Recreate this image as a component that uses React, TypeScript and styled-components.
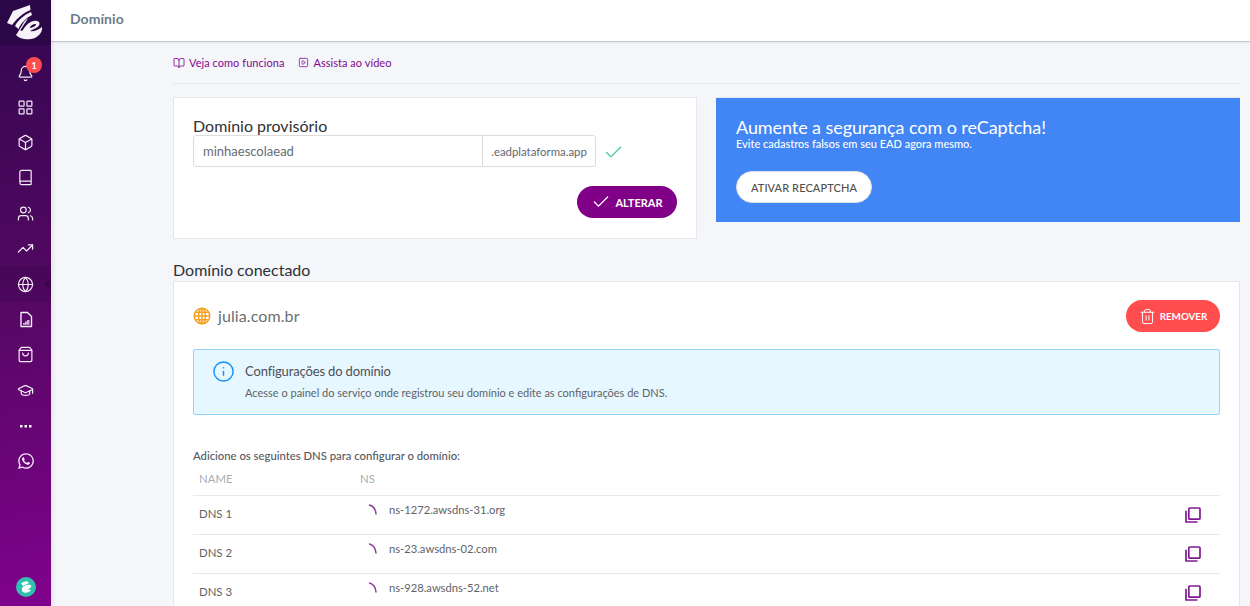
import React from "react";
import styled, { createGlobalStyle } from "styled-components";
import { Bell, LayoutGrid, Box, Book, Users, TrendingUp, Globe, ShoppingBag, GraduationCap, Check, Trash2, Info, BookOpen, SquarePlay } from "lucide-react";
import { FaWhatsapp } from "react-icons/fa";

const Global = createGlobalStyle`
  html, body { margin: 0; padding: 0; height: 606px; overflow: hidden; background: #f4f6fa; }
  * { box-sizing: border-box; }
  body { font-family: Lato, "Liberation Sans", sans-serif; color: #4a4a4a; }
`;

const Page = styled.div`display: flex; width: 1250px; height: 606px; overflow: hidden;`;

const Sidebar = styled.aside`
  width: 51px; height: 606px; flex: none; display: flex; flex-direction: column; align-items: stretch;
  background: linear-gradient(170deg, #33074f 0%, #510860 45%, #80028c 100%);
  box-shadow: 2px 0 4px rgba(0,0,0,.08);
  z-index: 2;
`;
const LogoBox = styled.div`height: 45px; background: #2c0747; display: flex; flex: none;`;
const Nav = styled.nav`display: flex; flex-direction: column; padding-top: 9px; flex: 1;`;
const NavItem = styled.div<{ $active?: boolean }>`
  position: relative; height: 35.4px; display: flex; align-items: center; justify-content: center; color: #f4ecf7;
  ${(p) => p.$active && `background: rgba(50, 5, 70, .25);
    &::after { content: ""; position: absolute; right: 0; top: 50%; margin-top: -7px; border: 7px solid transparent; border-left-width: 0; border-right-color: rgba(50, 5, 70, .55); }`}
`;
const BellIcon = styled(Bell)`margin-top: 3px;`;
const Badge = styled.span`
  position: absolute; left: 26px; top: 3px; width: 16px; height: 16px; border-radius: 50%; background: #ff4d4f; color: #fff;
  font-size: 9px; font-weight: 700; display: flex; align-items: center; justify-content: center;
`;
const Avatar = styled.div`
  width: 20px; height: 20px; border-radius: 50%; background: #2fc0b0; margin: 0 0 9px 16px; flex: none;
  display: flex; align-items: center; justify-content: center;
`;

const Main = styled.main`flex: 1; min-width: 0; display: flex; flex-direction: column;`;
const TopBar = styled.header`
  height: 42px; flex: none; background: #fff; border-bottom: 1px solid #c4c6ca; box-shadow: 0 1px 2px rgba(0,0,0,.06);
  padding-left: 19px; display: flex; align-items: center; padding-bottom: 5px;
  font-size: 14px; font-weight: 700; color: #6b7b8c; letter-spacing: .05px;
`;
const Content = styled.div`padding: 0 10px 0 122px; display: flex; flex-direction: column;`;
const HelpRow = styled.div`
  height: 42px; border-bottom: 1px solid #e8e9ec; display: flex; align-items: center; gap: 14px;
`;
const HelpLink = styled.a`
  display: inline-flex; align-items: center; gap: 4px; font-size: 11px; color: #7f0a8c; letter-spacing: .04px;
  svg { color: #8b1a98; }
`;
const Columns = styled.div`display: flex; gap: 19px; align-items: flex-start; margin-top: 13px;`;
const Card = styled.section`
  background: #fff; border: 1px solid #e6e7ea; width: 524px; height: 142px; padding: 19px 19px 0 19px;
`;
const CardTitle = styled.div`font-size: 16px; line-height: 17px; color: #2f3136; margin-bottom: 1px;`;
const InputRow = styled.div`display: flex; align-items: center; gap: 7px;`;
const InputGroup = styled.div`
  display: flex; width: 403px; height: 32px; border: 1px solid #dcdcdc; border-radius: 3px; flex: none;
`;
const InputText = styled.div`flex: 1; padding: 0 0 1px 9px; display: flex; align-items: center; font-size: 13px; color: #666c75;`;
const InputAddon = styled.div`width: 113px; border-left: 1px solid #dcdcdc; display: flex; align-items: center; justify-content: center; font-size: 11.4px; color: #5f6670;`;
const StatusCheck = styled(Check)`margin-top: 2px;`;
const ActionRow = styled.div`display: flex; justify-content: flex-end; margin-top: 19px;`;
const PillButton = styled.button<{ $bg: string; $w: number; $size: number }>`
  width: ${(p) => p.$w}px; height: 32px; border-radius: 16px; border: 0; background: ${(p) => p.$bg}; color: #fff;
  display: inline-flex; align-items: center; justify-content: center; gap: 4px; font: 700 ${(p) => p.$size}px Lato, sans-serif; padding: 0;
`;
const Promo = styled.section`
  background: #4285f4; width: 524px; height: 125px; padding: 19px 20px; color: #fff; border-top: 1px solid #e6e7ea;
`;
const PromoTitle = styled.div`font-size: 18px; line-height: 20px; letter-spacing: -.08px;`;
const PromoSub = styled.div`font-size: 11px; line-height: 13px; font-weight: 500;`;
const PromoButton = styled.button`
  margin-top: 21px; width: 136px; height: 32px; border-radius: 16px; background: #fff; border: 1px solid #dcdfe6; color: #55504c;
  font: 500 11px Lato, sans-serif; letter-spacing: .1px; padding: 0;
`;
const SectionTitle = styled.div`font-size: 16px; color: #2f3136; line-height: 18px; margin-top: 22px;`;
const BigCard = styled.section`background: #fff; border: 1px solid #e6e7ea; padding: 18px 19px 0 19px; margin-top: 2px; height: 340px;`;
const DomainRow = styled.div`display: flex; align-items: center; justify-content: space-between; height: 32px;`;
const DomainName = styled.div`display: flex; align-items: center; gap: 7px; font-size: 16px; color: #6a6f76; letter-spacing: .1px; padding-bottom: 1px;`;
const Notice = styled.div`
  margin-top: 17px; height: 66px; background: #e6f7ff; border: 1px solid #91d5ff; border-radius: 2px; display: flex; align-items: flex-start; padding: 12px 19px 0;
`;
const NoticeIcon = styled.div`color: #1890ff; width: 33px; flex: none; display: flex; margin: -2px 0 0 -1px;`;
const NoticeTitle = styled.div`font-size: 13px; line-height: 19px; color: #4f4f55; letter-spacing: -.15px;`;
const NoticeText = styled.div`font-size: 11px; line-height: 17px; color: #5f6368; margin-top: 3px;`;
const DnsHeading = styled.div`font-size: 11.3px; font-weight: 500; color: #55585e; margin-top: 34px; line-height: 14px;`;
const Table = styled.div`display: flex; flex-direction: column; margin-top: 1px;`;
const HeadRow = styled.div`display: flex; height: 32px; align-items: center; border-bottom: 1px solid #e8e8e8; font-size: 11.4px; color: #a9adb3; padding: 0 6px 2px;`;
const Row = styled.div`display: flex; height: 39px; align-items: center; border-bottom: 1px solid #e8e8e8; padding: 0 19px 0 6px; font-size: 11.4px; color: #5f6368;`;
const NameCell = styled.div`width: 161px; flex: none;`;
const RowName = styled(NameCell)`padding-bottom: 4px;`;
const ValueCell = styled.div`flex: 1; display: flex; align-items: center; gap: 11px; margin-top: -11px; font-size: 11.2px;`;
const Spinner = styled.svg`width: 18px; height: 18px; flex: none; margin-top: 2px;`;
const CopyIcon = styled.svg`width: 16px; height: 16px; flex: none;`;

const items = [Bell, LayoutGrid, Box, Book, Users, TrendingUp, Globe, "file", ShoppingBag, GraduationCap, "dots", "wa"] as const;

const FileIcon = () => (
  <svg width="16" height="17" viewBox="0 0 16 17" fill="none" stroke="currentColor" strokeWidth="1.4">
    <path d="M3 1.500h6.500L13.500 5.500V15.500H3z" strokeLinejoin="round" />
    <path d="M5 13.800V12h2V10.500h2V9h2.500v4.800z" fill="currentColor" stroke="none" opacity=".75" />
  </svg>
);
const Dots = () => (
  <svg width="14" height="4" viewBox="0 0 14 4" fill="#fff"><rect x="1" y="1" width="2.500" height="2.500" /><rect x="5.500" y="1" width="2.500" height="2.500" /><rect x="10" y="1" width="2.500" height="2.500" /></svg>
);
const Logo = () => (
  <svg width="51" height="45" viewBox="0 0 51 45" fill="#f6f2f8">
    <path d="M7 23 L13 11 L30 5 L30.500 10 C25 12 18 17 12 25 Z" />
    <path d="M15 26 C18 20 24 15 31 12 L32 15 C26 18 21 23 18.500 29 Z" />
    <path d="M24 22 C25.500 20 27 19 28 18.500 L21 29 C20 31 21 32 23 30 C26 25 31 20 37 21 C41 22 40 26 36 28 L30 31 C34 32 38 30 42 27 C43 32 38 38 31 39 C25 40 20 39 16 35 C18 32 21 27 24 22 Z" />
    <path d="M30 27 C32 24.500 35 23.500 36 24.500 C36 26 32.500 27.500 30 28 Z" fill="#2c0747" />
  </svg>
);
const MiniLogo = () => (
  <svg width="14" height="14" viewBox="0 0 14 14" fill="#fff">
    <path d="M2 3 L8 1 L10 3 L4 6 Z" /><path d="M3 8 C5 5 9 4 12 5 C13 8 10 9 8 9 L12 10 C10 13 5 14 3 11 Z" />
  </svg>
);
const SpinnerArc = () => (
  <Spinner viewBox="0 0 18 18" fill="none"><path d="M9.500 3 C13 3.800 15.500 7 16 12" stroke="#8c3f9c" strokeWidth="1.500" strokeLinecap="round" /></Spinner>
);
const OrangeGlobe = () => (
  <svg width="18" height="18" viewBox="0 0 18 18" fill="none" stroke="#f5a11f" strokeWidth="1.500">
    <circle cx="9" cy="9" r="7.800" />
    <ellipse cx="9" cy="9" rx="3.500" ry="7.800" />
    <path d="M9 1.200V16.800M1.200 9H16.800M2.300 5.200H15.700M2.300 12.800H15.700" />
  </svg>
);
const CopyGlyph = () => (
  <CopyIcon viewBox="0 0 16 16" fill="none" stroke="#7f1a92" strokeWidth="1.700">
    <rect x="3.800" y="1" width="11.200" height="11.200" rx="1" />
    <path d="M1 3.800V15H12.500" />
  </CopyIcon>
);

const rows = [["DNS 1", "ns-1272.awsdns-31.org"], ["DNS 2", "ns-23.awsdns-02.com"], ["DNS 3", "ns-928.awsdns-52.net"]];

export default function App() {
  return (
    <Page>
      <Global />
      <Sidebar>
        <LogoBox><Logo /></LogoBox>
        <Nav>
          {items.map((I, i) => (
            <NavItem key={i} $active={I === Globe}>
              {I === "file" ? <FileIcon /> : I === "dots" ? <Dots /> : I === "wa" ? <FaWhatsapp size={18} /> : I === Bell ? <BellIcon size={17} strokeWidth={1.7} /> : <I size={17} strokeWidth={1.7} />}
              {I === Bell && <Badge>1</Badge>}
            </NavItem>
          ))}
        </Nav>
        <Avatar><MiniLogo /></Avatar>
      </Sidebar>
      <Main>
        <TopBar>Domínio</TopBar>
        <Content>
          <HelpRow>
            <HelpLink><BookOpen size={12} strokeWidth={1.8} />Veja como funciona</HelpLink>
            <HelpLink><SquarePlay size={11} strokeWidth={1.8} />Assista ao vídeo</HelpLink>
          </HelpRow>
          <Columns>
            <Card>
              <CardTitle>Domínio provisório</CardTitle>
              <InputRow>
                <InputGroup>
                  <InputText>minhaescolaead</InputText>
                  <InputAddon>.eadplataforma.app</InputAddon>
                </InputGroup>
                <StatusCheck size={21} strokeWidth={1.5} color="#3fc9a3" />
              </InputRow>
              <ActionRow>
                <PillButton $bg="#800087" $w={100} $size={11}><Check size={20} strokeWidth={1.5} />ALTERAR</PillButton>
              </ActionRow>
            </Card>
            <Promo>
              <PromoTitle>Aumente a segurança com o reCaptcha!</PromoTitle>
              <PromoSub>Evite cadastros falsos em seu EAD agora mesmo.</PromoSub>
              <PromoButton>ATIVAR RECAPTCHA</PromoButton>
            </Promo>
          </Columns>
          <SectionTitle>Domínio conectado</SectionTitle>
          <BigCard>
            <DomainRow>
              <DomainName><OrangeGlobe />julia.com.br</DomainName>
              <PillButton $bg="#ff4d4f" $w={94} $size={9.8}><Trash2 size={17} strokeWidth={1.4} />REMOVER</PillButton>
            </DomainRow>
            <Notice>
              <NoticeIcon><Info size={23} strokeWidth={1.5} /></NoticeIcon>
              <div>
                <NoticeTitle>Configurações do domínio</NoticeTitle>
                <NoticeText>Acesse o painel do serviço onde registrou seu domínio e edite as configurações de DNS.</NoticeText>
              </div>
            </Notice>
            <DnsHeading>Adicione os seguintes DNS para configurar o domínio:</DnsHeading>
            <Table>
              <HeadRow><NameCell>NAME</NameCell><div>NS</div></HeadRow>
              {rows.map(([n, v]) => (
                <Row key={n}>
                  <RowName>{n}</RowName>
                  <ValueCell><SpinnerArc />{v}</ValueCell>
                  <CopyGlyph />
                </Row>
              ))}
            </Table>
          </BigCard>
        </Content>
      </Main>
    </Page>
  );
}
